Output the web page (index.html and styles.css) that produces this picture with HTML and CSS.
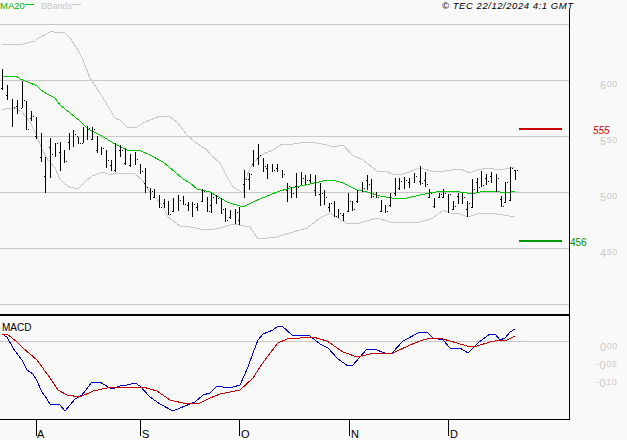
FILE: index.html
```html
<!DOCTYPE html>
<html lang="en">
<head>
<meta charset="utf-8">
<title>Chart</title>
<link rel="stylesheet" href="styles.css">
</head>
<body>
<svg class="chart" width="627" height="440" viewBox="0 0 627 440">
  <path class="grid" d="M0 24.5H569M0 80.5H569M0 136.5H569M0 192.5H569M0 248.5H569M0 304.5H569M0 341.5H569"/>
  <path class="band" d="M2 44.5L10 45L23 44L35 41L37 39L50 32L51 31L54 32L65 33L70 38L78 50L82 58L90 78L100 93L115 118L120 120L127 127L135 128L145 122L160 116L170 117L177 122L187 135L195 142L207 150L210 154L220 163L227 177L233 187L243 193L245 180L253 163L263 154L273 150L282 144L293 144L307 142L317 143L327 145L333 147L343 145L352 155L363 160L377 171L387 172L392 174L403 174L420 168L435 172L445 171L460 169L470 173L477 170L487 168L500 170L515 167"/>
  <path class="band" d="M2 110L8 108L15 108L22 112L30 122L37 136L41 147L48 160L55 168L60 179L65 184L70 187L78 189L85 182L92 176L100 173L103 172L110 175L117 173L125 173L135 174L142 180L150 192L155 197L162 205L168 217L180 226L190 227L200 229L210 230L220 228L233 224L250 227L258 239L277 237L293 232L307 228L320 218L330 213L338 218L348 224L360 223L377 218L390 222L420 222L433 218L443 210L450 213L460 214L468 217L480 213L497 214L515 217"/>
  <path class="ma" d="M2 77L6 76.5L17 76.5L20 79L28 82L37 86L41 90L47 94L55 98L60 105L70 113L80 121L88 129L100 135L115 144L127 150L141 151L150 155L163 162L175 172L183 179L190 183L197 189L210 192L217 196L227 202L243 207L255 201L277 192L290 188L310 184L323 181L333 180L343 183L357 190L367 192L380 196L392 198L407 198L420 195L430 193L443 191L450 191L460 192L473 194L483 191L493 191L500 192L510 192L515 191"/>
  <path class="bars" d="M2.5 69V90M1 88.5h1M7.5 85V100M6 95.5h1M12.5 99V127M14 107.5h1M17.5 100V114M16 106.5h1M22.5 81V108M21 108.5h1M24 100.5h1M26.5 101V130M28 129.5h1M31.5 111V121M30 118.5h1M33 116.5h1M36.5 117V139M35 136.5h1M41.5 133V162M40 157.5h1M45.5 157V193M44 176.5h1M50.5 138V178M49 147.5h1M52 154.5h1M55.5 143V157M57 143.5h1M60.5 142V171M59 152.5h1M64.5 150V163M66 161.5h1M69.5 133V150M68 142.5h1M73.5 130V147M75 134.5h1M78.5 137V144M77 136.5h1M80 143.5h1M83.5 127V143M82 143.5h1M87.5 126V140M89 128.5h1M92.5 127V140M94 129.5h1M91 139.5h1M97.5 136V153M96 150.5h1M101.5 147V155M103 148.5h1M106.5 150V168M108 160.5h1M111.5 160V171M110 165.5h1M115.5 143V172M114 170.5h1M120.5 145V157M122 150.5h1M119 150.5h1M125.5 148V165M124 163.5h1M130.5 154V167M129 165.5h1M135.5 152V165M137 159.5h1M140.5 164V174M142 171.5h1M145.5 168V193M144 183.5h1M147 187.5h1M150.5 188V200M152 191.5h1M154.5 189V198M153 197.5h1M159.5 195V208M161 207.5h1M164.5 199V208M163 203.5h1M168.5 201V215M170 214.5h1M173.5 198V212M172 211.5h1M178.5 195V211M180 200.5h1M183.5 196V205M185 204.5h1M188.5 202V211M187 205.5h1M192.5 202V217M194 204.5h1M197.5 203V211M196 207.5h1M202.5 189V202M201 201.5h1M204 191.5h1M207.5 197V212M209 211.5h1M211.5 193V213M210 205.5h1M213 197.5h1M216.5 195V204M218 198.5h1M221.5 198V214M223 209.5h1M225.5 208V222M227 220.5h1M230.5 210V219M229 217.5h1M235.5 209V224M237 212.5h1M239.5 207V225M238 220.5h1M244.5 170V198M243 184.5h1M246 179.5h1M249.5 173V190M248 179.5h1M251 174.5h1M253.5 150V167M252 164.5h1M258.5 144V165M257 158.5h1M260 155.5h1M263.5 158V172M265 166.5h1M267.5 164V179M266 168.5h1M272.5 164V172M274 170.5h1M277.5 164V172M276 168.5h1M282.5 170V178M284 174.5h1M287.5 183V202M286 190.5h1M289 186.5h1M291.5 187V198M293 193.5h1M296.5 173V198M298 187.5h1M295 186.5h1M301.5 172V185M303 178.5h1M305.5 175V185M307 180.5h1M310.5 174V183M309 180.5h1M315.5 175V196M314 190.5h1M320.5 183V206M319 194.5h1M322 193.5h1M324.5 190V205M326 197.5h1M329.5 203V212M328 207.5h1M331 203.5h1M334.5 201V217M336 216.5h1M338.5 209V218M340 213.5h1M343.5 213V221M342 215.5h1M348.5 193V212M350 201.5h1M347 211.5h1M352.5 201V211M354 209.5h1M357.5 190V203M356 201.5h1M362.5 182V192M364 188.5h1M367.5 175V190M366 180.5h1M369 184.5h1M371.5 179V198M373 196.5h1M376.5 192V198M378 197.5h1M381.5 200V212M380 211.5h1M385.5 205V213M387 211.5h1M390.5 193V207M389 205.5h1M395.5 178V196M394 193.5h1M399.5 178V190M401 181.5h1M398 188.5h1M404.5 177V189M406 180.5h1M409.5 178V188M408 182.5h1M414.5 173V183M416 176.5h1M420.5 166V185M419 181.5h1M422 183.5h1M425.5 172V187M424 180.5h1M427 184.5h1M429.5 189V198M428 197.5h1M431 193.5h1M434.5 198V208M433 206.5h1M439.5 193V198M438 197.5h1M441 194.5h1M443.5 189V198M442 197.5h1M445 193.5h1M448.5 194V213M450 194.5h1M453.5 201V210M452 209.5h1M455 206.5h1M458.5 193V204M457 196.5h1M462.5 193V204M464 197.5h1M467.5 201V217M466 209.5h1M469 203.5h1M472.5 179V208M471 207.5h1M474 189.5h1M477.5 178V193M476 182.5h1M479 187.5h1M481.5 171V187M483 185.5h1M486.5 174V185M488 181.5h1M485 178.5h1M491.5 172V183M490 176.5h1M496.5 174V192M498 178.5h1M501.5 196V207M500 199.5h1M503 206.5h1M505.5 182V203M507 182.5h1M504 202.5h1M510.5 167V201M509 200.5h1M512 168.5h1M515.5 170V180M517 170.5h1M514 170.5h1"/>
  <path class="macd" d="M2 334L7 337L13 348L22 360L27 370L33 374L37 381L42 392L47 399L50 404L60 405L65 411L75 399L82 395L92 382L100 382L108 387L112 389L120 386L127 385L135 383L140 386L150 397L160 404L173 411L185 406L195 402L203 395L210 393L217 386L223 387L233 387L240 385L248 367L253 353L258 340L263 334L273 330L278 326L282 326L292 335L310 336L320 344L328 348L338 359L348 366L353 365L367 349L377 350L387 354L392 353L403 341L420 332L427 332L433 338L443 340L450 348L460 348L468 353L478 343L490 334L495 334L500 340L505 338L510 332L515 329"/>
  <path class="signal" d="M2 334L7 334L17 342L23 348L37 360L50 378L58 390L67 395L80 397L93 391L107 388L133 387L143 387L157 391L170 400L187 404L200 403L210 398L220 394L240 390L253 378L260 367L267 357L278 343L287 339L300 338L313 337L327 341L343 352L357 357L370 354L380 353L393 353L410 345L420 341L430 338L443 339L457 343L467 346L477 346L490 342L500 340L507 340L515 336"/>
  <path class="heavy" d="M0 315H569"/>
  <path class="axis" d="M569.5 9V419.5M0 419.5H569.5M36.5 419V436M140.5 419V436M239.5 419V436M349.5 419V436M448.5 419V436"/>
  <path class="target-high" d="M519 129H562"/>
  <path class="target-low" d="M519 241H562"/>
  <path class="legend-ma" d="M25 4.5H34"/>
  <path class="legend-band" d="M72 4.5H81"/>
  <text class="lbl lbl-ma" x="0" y="8.7">MA20</text>
  <text class="lbl lbl-band" x="41" y="8.7">BBands</text>
  <text class="lbl lbl-copy" x="442" y="8.7">© TEC 22/12/2024 4:1 GMT</text>
  <text class="lbl lbl-price" x="600" y="87"><tspan class="big" dy="2">6</tspan><tspan dy="-2">00</tspan></text>
  <text class="lbl lbl-price" x="600" y="143"><tspan class="big" dy="2">5</tspan><tspan dy="-2">50</tspan></text>
  <text class="lbl lbl-price" x="600" y="199"><tspan class="big" dy="2">5</tspan><tspan dy="-2">00</tspan></text>
  <text class="lbl lbl-price" x="600" y="255"><tspan class="big" dy="2">4</tspan><tspan dy="-2">50</tspan></text>
  <text class="lbl lbl-price" x="600" y="349"><tspan class="big" dy="2">0</tspan><tspan dy="-2">00</tspan></text>
  <text class="lbl lbl-price" x="596" y="367">-<tspan class="big" dy="2">0</tspan><tspan dy="-2">05</tspan></text>
  <text class="lbl lbl-price" x="596" y="385">-<tspan class="big" dy="2">0</tspan><tspan dy="-2">10</tspan></text>
  <text class="lbl lbl-red" x="593" y="134">555</text>
  <text class="lbl lbl-green" x="570" y="246">456</text>
  <text class="lbl lbl-macd" x="2" y="331">MACD</text>
  <text class="lbl lbl-month" x="37" y="438">A</text>
  <text class="lbl lbl-month" x="142" y="438">S</text>
  <text class="lbl lbl-month" x="241" y="438">O</text>
  <text class="lbl lbl-month" x="351" y="438">N</text>
  <text class="lbl lbl-month" x="450" y="438">D</text>
</svg>
</body>
</html>
```

FILE: styles.css
```css
html, body {
  margin: 0;
  padding: 0;
  background: #f9f9f9;
  overflow: hidden;
}

.chart {
  display: block;
  background: #f9f9f9;
  font-family: "Liberation Sans", Arial, sans-serif;
}

.chart path {
  fill: none;
  shape-rendering: crispEdges;
  stroke-width: 1;
}

.chart .grid { stroke: #c8c8c8; }
.chart .band { stroke: #c8c8c8; }
.chart .ma { stroke: #00c800; }
.chart .bars { stroke: #000; }
.chart .macd { stroke: #0000c8; }
.chart .signal { stroke: #c80000; }
.chart .heavy { stroke: #000; stroke-width: 2; }
.chart .axis { stroke: #000; }
.chart .target-high { stroke: #c80000; stroke-width: 2; }
.chart .target-low { stroke: #009600; stroke-width: 2; }
.chart .legend-ma { stroke: #00c800; }
.chart .legend-band { stroke: #c8c8c8; }

.lbl { font-size: 9.5px; }
.lbl-ma { fill: #00b400; }
.lbl-band { fill: #c8c8c8; font-size: 8.8px; }
.lbl-copy { fill: #000; font-style: italic; letter-spacing: 0.55px; }
.lbl-price { fill: #c8c8c8; font-size: 9px; letter-spacing: 0.5px; }
.lbl-price .big { font-size: 11px; }
.lbl-red { fill: #c80000; font-style: italic; font-size: 10px; }
.lbl-green { fill: #009600; font-size: 10px; }
.lbl-macd { fill: #000; font-size: 10px; }
.lbl-month { fill: #000; font-size: 11px; }
```
